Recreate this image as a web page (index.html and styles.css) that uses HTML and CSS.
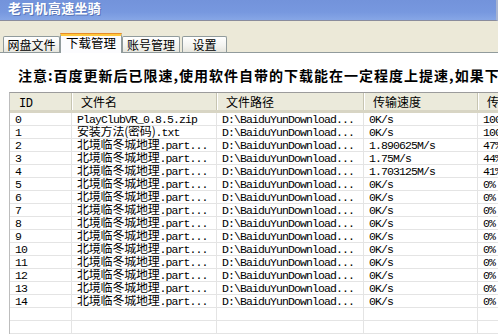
FILE: index.html
```html
<!DOCTYPE html>
<html lang="zh">
<head>
<meta charset="utf-8">
<title>老司机高速坐骑</title>
<link rel="stylesheet" href="styles.css">
</head>
<body>
<div class="window">
  <div class="titlebar"><span class="title">老司机高速坐骑</span></div>
  <div class="tabstrip">
    <div class="tab">网盘文件</div>
    <div class="tab active">下载管理</div>
    <div class="tab">账号管理</div>
    <div class="tab">设置</div>
  </div>
  <div class="page">
    <div class="notice">注意:百度更新后已限速,使用软件自带的下载能在一定程度上提速,如果下载速度不理想请稍后再试</div>
    <div class="list">
      <div class="row head">
        <div class="c"><span class="m">ID</span></div>
        <div class="c">文件名</div>
        <div class="c">文件路径</div>
        <div class="c">传输速度</div>
        <div class="c">传输进度</div>
      </div>
      <div class="row"><div class="c m">0</div><div class="c m">PlayClubVR_0.8.5.zip</div><div class="c m">D:\BaiduYunDownload...</div><div class="c m">0K/s</div><div class="c m">100%</div></div>
      <div class="row"><div class="c m">1</div><div class="c m"><span class="k">安装方法(密码)</span>.txt</div><div class="c m">D:\BaiduYunDownload...</div><div class="c m">0K/s</div><div class="c m">100%</div></div>
      <div class="row"><div class="c m">2</div><div class="c m"><span class="k">北境临冬城地理</span>.part...</div><div class="c m">D:\BaiduYunDownload...</div><div class="c m">1.890625M/s</div><div class="c m">47%</div></div>
      <div class="row"><div class="c m">3</div><div class="c m"><span class="k">北境临冬城地理</span>.part...</div><div class="c m">D:\BaiduYunDownload...</div><div class="c m">1.75M/s</div><div class="c m">44%</div></div>
      <div class="row"><div class="c m">4</div><div class="c m"><span class="k">北境临冬城地理</span>.part...</div><div class="c m">D:\BaiduYunDownload...</div><div class="c m">1.703125M/s</div><div class="c m">41%</div></div>
      <div class="row"><div class="c m">5</div><div class="c m"><span class="k">北境临冬城地理</span>.part...</div><div class="c m">D:\BaiduYunDownload...</div><div class="c m">0K/s</div><div class="c m">0%</div></div>
      <div class="row"><div class="c m">6</div><div class="c m"><span class="k">北境临冬城地理</span>.part...</div><div class="c m">D:\BaiduYunDownload...</div><div class="c m">0K/s</div><div class="c m">0%</div></div>
      <div class="row"><div class="c m">7</div><div class="c m"><span class="k">北境临冬城地理</span>.part...</div><div class="c m">D:\BaiduYunDownload...</div><div class="c m">0K/s</div><div class="c m">0%</div></div>
      <div class="row"><div class="c m">8</div><div class="c m"><span class="k">北境临冬城地理</span>.part...</div><div class="c m">D:\BaiduYunDownload...</div><div class="c m">0K/s</div><div class="c m">0%</div></div>
      <div class="row"><div class="c m">9</div><div class="c m"><span class="k">北境临冬城地理</span>.part...</div><div class="c m">D:\BaiduYunDownload...</div><div class="c m">0K/s</div><div class="c m">0%</div></div>
      <div class="row"><div class="c m">10</div><div class="c m"><span class="k">北境临冬城地理</span>.part...</div><div class="c m">D:\BaiduYunDownload...</div><div class="c m">0K/s</div><div class="c m">0%</div></div>
      <div class="row"><div class="c m">11</div><div class="c m"><span class="k">北境临冬城地理</span>.part...</div><div class="c m">D:\BaiduYunDownload...</div><div class="c m">0K/s</div><div class="c m">0%</div></div>
      <div class="row"><div class="c m">12</div><div class="c m"><span class="k">北境临冬城地理</span>.part...</div><div class="c m">D:\BaiduYunDownload...</div><div class="c m">0K/s</div><div class="c m">0%</div></div>
      <div class="row"><div class="c m">13</div><div class="c m"><span class="k">北境临冬城地理</span>.part...</div><div class="c m">D:\BaiduYunDownload...</div><div class="c m">0K/s</div><div class="c m">0%</div></div>
      <div class="row"><div class="c m">14</div><div class="c m"><span class="k">北境临冬城地理</span>.part...</div><div class="c m">D:\BaiduYunDownload...</div><div class="c m">0K/s</div><div class="c m">0%</div></div>
      <div class="row"><div class="c"></div><div class="c"></div><div class="c"></div><div class="c"></div><div class="c"></div></div>
      <div class="row"><div class="c"></div><div class="c"></div><div class="c"></div><div class="c"></div><div class="c"></div></div>
    </div>
  </div>
</div>
</body>
</html>
```

FILE: styles.css
```css
html, body {
  margin: 0;
  padding: 0;
  background: #ffffff;
}
body {
  width: 498px;
  height: 334px;
  overflow: hidden;
  font-family: "Noto Sans CJK SC", sans-serif;
  color: #000;
}
.window {
  width: 498px;
  height: 334px;
  overflow: hidden;
}
.titlebar {
  height: 21px;
  box-sizing: border-box;
  background: linear-gradient(#7393db 0%, #7798df 60%, #86a6e6 100%);
  border-bottom: 1px solid #8a8c9c;
  border-right: 2px solid #a8b4d0;
  padding: 0 0 0 8px;
  display: flex;
  align-items: flex-start;
}
.title {
  color: #ffffff;
  font-weight: bold;
  font-size: 13px;
  line-height: 15px;
  letter-spacing: 0.3px;
  text-shadow: 1px 1px 0 #5a76b8;
}
.tabstrip {
  height: 32px;
  box-sizing: border-box;
  background: #ece9d8;
  border-bottom: 1px solid #919b9c;
  display: flex;
  align-items: flex-end;
  padding-left: 3px;
}
.tab {
  height: 16px;
  width: 57px;
  box-sizing: border-box;
  border: 1px solid #919b9c;
  border-bottom: none;
  border-radius: 2px 2px 0 0;
  background: linear-gradient(#ffffff, #f3f3ef 60%, #e6e5dd);
  font-size: 12px;
  line-height: 15px;
  padding: 0;
  text-align: center;
  white-space: nowrap;
}
.tab:nth-child(3) { width: 58px; margin-right: 2px; }
.tab:nth-child(4) { width: 45px; }
.tab.active {
  height: 20px;
  width: 62px;
  margin-bottom: -1px;
  background: #fcfcfe;
  border-top: 3px solid #ffc83c;
  position: relative;
  line-height: 14px;
  font-size: 12.5px;
}
.tab.active::before {
  content: "";
  position: absolute;
  left: -1px;
  right: -1px;
  top: -3px;
  height: 1px;
  background: #e68b2c;
  border-radius: 2px 2px 0 0;
}
.page {
  padding: 15px 0 0 0;
}
.notice {
  font-size: 14px;
  font-weight: bold;
  line-height: 15px;
  letter-spacing: 1px;
  white-space: nowrap;
  padding-left: 18px;
  margin-bottom: 9px;
}
.list {
  margin-left: 9px;
  width: 560px;
  border-top: 1px solid #9c9c9c;
  border-left: 1px solid #bdbdbd;
}
.row {
  display: grid;
  grid-template-columns: 62px 145px 147px 114px 92px;
  grid-template-rows: 12px;
  height: 13px;
  box-sizing: border-box;
  border-bottom: 1px solid #e4e4e4;
}
.row .c {
  height: 12px;
  border-right: 1px solid #e4e4e4;
  padding-left: 5px;
  font-size: 11.5px;
  line-height: 14px;
  white-space: nowrap;
  overflow: hidden;
}
.m {
  font-family: "Liberation Mono", "Noto Sans CJK SC", monospace;
  letter-spacing: -0.9px;
}
.k {
  font-family: "Noto Sans CJK SC", sans-serif;
  font-size: 12px;
  letter-spacing: -0.2px;
  line-height: 10px;
}
.row.head {
  height: 20px;
  grid-template-rows: 17px;
  background: #ebeadb;
  border-bottom: 3px solid #d8d5c4;
}
.row.head .c {
  height: 17px;
  font-size: 12px;
  line-height: 17px;
  padding-left: 9px;
  border-right: 1px solid #c7c5b2;
  box-shadow: 1px 0 0 #ffffff;
}
.row.head .c .m {
  font-size: 12px;
  letter-spacing: -0.5px;
}
```
